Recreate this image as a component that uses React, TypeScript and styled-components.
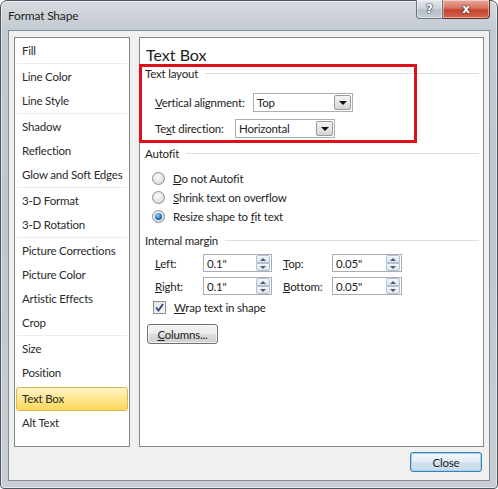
import React from 'react';
import styled, { createGlobalStyle } from 'styled-components';

const GlobalStyle = createGlobalStyle`
  html, body {
    margin: 0;
    padding: 0;
    background: #ffffff;
  }
  body {
    font-family: Lato, "Liberation Sans", sans-serif;
    font-size: 11.5px;
    letter-spacing: -0.2px;
    color: #1e1e1e;
  }
  * {
    box-sizing: border-box;
  }
`;

const Window = styled.div`
  width: 498px;
  height: 489px;
  display: flex;
  flex-direction: column;
  padding: 0 7px 7px 7px;
  border: 1px solid #4f565e;
  border-radius: 7px 7px 4px 4px;
  background: linear-gradient(180deg, #d6dbe1 0%, #c4cad1 6%, #bfc6ce 45%, #c9ced5 100%);
  box-shadow: inset 0 0 0 1px rgba(255, 255, 255, 0.5);
`;

const TitleBar = styled.div`
  height: 29px;
  display: flex;
  align-items: flex-start;
`;

const Title = styled.div`
  margin-top: 7px;
  line-height: 16px;
  font-size: 12px;
  color: #1e1e1e;
`;

const Caption = styled.div`
  margin-left: auto;
  margin-top: -1px;
  display: flex;
`;

const CaptionButton = styled.div<{ $close?: boolean }>`
  width: ${(p) => (p.$close ? 47 : 27)}px;
  height: 19px;
  display: flex;
  align-items: center;
  justify-content: center;
  border: 1px solid ${(p) => (p.$close ? '#6b2b22' : '#6a737d')};
  border-top: none;
  border-left-width: ${(p) => (p.$close ? 0 : 1)}px;
  border-radius: ${(p) => (p.$close ? '0 0 4px 0' : '0 0 0 4px')};
  background: ${(p) =>
    p.$close
      ? 'linear-gradient(180deg, #e9a99c 0%, #d8735f 45%, #c5422b 55%, #d2664c 100%)'
      : 'linear-gradient(180deg, #e4e8ed 0%, #cfd5dc 45%, #b7bfc8 55%, #c6cdd5 100%)'};
  box-shadow: inset 0 0 0 1px rgba(255, 255, 255, 0.45);
  color: #ffffff;
  font-family: "DejaVu Sans", sans-serif;
  font-weight: bold;
  font-size: 12px;
  letter-spacing: 0;
  text-shadow: 0 0 1px #30343a, 0 0 1px #30343a, 0 0 2px #30343a;
`;

const Client = styled.div`
  flex: 1;
  display: flex;
  flex-direction: column;
  padding: 6px 5px 8px 5px;
  background: #f0f0f0;
  border: 1px solid #7f8c99;
`;

const Body = styled.div`
  height: 410px;
  display: flex;
  gap: 9px;
`;

const SideList = styled.div`
  width: 116px;
  padding: 1px 1px 0 1px;
  background: #ffffff;
  border: 1px solid #828790;
`;

const Item = styled.div<{ $selected?: boolean }>`
  height: 24px;
  line-height: ${(p) => (p.$selected ? 22 : 24)}px;
  padding-left: ${(p) => (p.$selected ? 5 : 6)}px;
  margin-top: ${(p) => (p.$selected ? 2 : 0)}px;
  color: #2a2a2a;
  white-space: nowrap;
  border: ${(p) => (p.$selected ? '1px solid #dcb650' : 'none')};
  border-radius: 3px;
  background: ${(p) =>
    p.$selected ? 'linear-gradient(180deg, #fff4c6 0%, #fde68e 50%, #fcd659 100%)' : 'transparent'};
`;

const Separator = styled.div`
  height: 2px;
  margin: 0 1px;
  border-top: 1px solid #ebebeb;
`;

const Panel = styled.div`
  flex: 1;
  position: relative;
  padding: 6px 4px 0 6px;
  background: #ffffff;
  border: 1px solid #828790;
`;

const Heading = styled.div`
  font-size: 16px;
  line-height: 22px;
  letter-spacing: 0;
  color: #1e1e1e;
`;

const GroupHeader = styled.div<{ $top: number }>`
  display: flex;
  align-items: center;
  height: 14px;
  margin-top: ${(p) => p.$top}px;
  margin-left: -1px;
`;

const GroupLine = styled.div`
  flex: 1;
  height: 1px;
  margin-left: 7px;
  background: #d5dfe5;
`;

const FieldRow = styled.div<{ $top: number }>`
  display: flex;
  align-items: center;
  height: 19px;
  margin-top: ${(p) => p.$top}px;
  padding-left: 9px;
`;

const FieldLabel = styled.div<{ $width: number }>`
  width: ${(p) => p.$width}px;
  white-space: nowrap;
`;

const Select = styled.div<{ $width: number }>`
  width: ${(p) => p.$width}px;
  height: 19px;
  display: flex;
  align-items: center;
  padding-left: 3px;
  background: #ffffff;
  border: 1px solid #abadb3;
`;

const DropButton = styled.div`
  width: 17px;
  height: 15px;
  margin: 0 1px 0 auto;
  display: flex;
  align-items: center;
  justify-content: center;
  border: 1px solid #9a9a9a;
  border-radius: 2px;
  background: linear-gradient(180deg, #f4f4f4 0%, #e6e6e6 50%, #d3d3d3 100%);
`;

const Arrow = styled.div`
  width: 0;
  height: 0;
  border-left: 4px solid transparent;
  border-right: 4px solid transparent;
  border-top: 4px solid #111111;
`;

const Annotation = styled.div`
  position: absolute;
  left: -1px;
  top: 26px;
  width: 278px;
  height: 79px;
  border: 3px solid #e0101a;
  pointer-events: none;
`;

const RadioRow = styled.div<{ $top: number }>`
  display: flex;
  align-items: center;
  gap: 8px;
  height: 19px;
  margin-top: ${(p) => p.$top}px;
  padding-left: 6px;
`;

const Radio = styled.div<{ $checked?: boolean }>`
  width: 13px;
  height: 13px;
  border-radius: 50%;
  display: flex;
  align-items: center;
  justify-content: center;
  border: 1px solid #8d8d8d;
  background: radial-gradient(circle at 40% 35%, #fbfbfb 0%, #e4e4e4 55%, #cfcfcf 100%);
  &::after {
    content: '';
    display: ${(p) => (p.$checked ? 'block' : 'none')};
    width: 7px;
    height: 7px;
    border-radius: 50%;
    background: radial-gradient(circle at 40% 35%, #9fd3f6 0%, #2a78bf 50%, #0d3b6e 100%);
  }
`;

const SpinGrid = styled.div`
  display: grid;
  grid-template-columns: 48px 80px 49px 70px;
  grid-auto-rows: 18px;
  row-gap: 5px;
  margin-top: 7px;
  padding-left: 9px;
  align-items: center;
`;

const SpinBox = styled.div<{ $width: number }>`
  width: ${(p) => p.$width}px;
  height: 18px;
  display: flex;
  align-items: center;
  padding-left: 3px;
  background: #ffffff;
  border: 1px solid #abadb3;
`;

const SpinButtons = styled.div`
  margin-left: auto;
  margin-right: 1px;
  width: 14px;
  height: 16px;
  display: flex;
  flex-direction: column;
`;

const SpinHalf = styled.div<{ $up?: boolean }>`
  flex: 1;
  display: flex;
  align-items: center;
  justify-content: center;
  border: 1px solid #b4c0ce;
  border-radius: ${(p) => (p.$up ? '2px 2px 0 0' : '0 0 2px 2px')};
  background: linear-gradient(180deg, #f3f6fa 0%, #dde5ef 100%);
  &::after {
    content: '';
    width: 0;
    height: 0;
    border-left: 3px solid transparent;
    border-right: 3px solid transparent;
    ${(p) => (p.$up ? 'border-bottom: 3px solid #4d5d75;' : 'border-top: 3px solid #4d5d75;')}
  }
`;

const CheckRow = styled.div`
  display: flex;
  align-items: center;
  gap: 8px;
  height: 14px;
  margin-top: 5px;
  padding-left: 7px;
`;

const CheckBox = styled.div`
  width: 13px;
  height: 13px;
  display: flex;
  align-items: center;
  justify-content: center;
  border: 1px solid #8e8f8f;
  background: linear-gradient(135deg, #dfe3ea 0%, #f7f8fa 100%);
`;

const PushButton = styled.div<{ $width: number; $default?: boolean }>`
  width: ${(p) => p.$width}px;
  height: 20px;
  display: flex;
  align-items: center;
  justify-content: center;
  border: 1px solid ${(p) => (p.$default ? '#3c7fb1' : '#707070')};
  border-radius: 3px;
  background: ${(p) =>
    p.$default
      ? 'linear-gradient(180deg, #f2f7fb 0%, #e3edf6 50%, #d2e1ee 51%, #c8dbeb 100%)'
      : 'linear-gradient(180deg, #f2f2f2 0%, #ebebeb 50%, #dddddd 51%, #cfcfcf 100%)'};
  box-shadow: inset 0 0 0 1px ${(p) => (p.$default ? '#9fd4f2' : 'rgba(255,255,255,0.7)')};
  color: #1e1e1e;
`;

const ColumnsButton = styled(PushButton)`
  margin-top: 10px;
  margin-left: 1px;
`;

const Footer = styled.div`
  display: flex;
  justify-content: flex-end;
  margin-top: 5px;
  padding-right: 2px;
`;

const U = styled.span`
  text-decoration: underline;
`;

const groups = [
  ['Fill'],
  ['Line Color', 'Line Style'],
  ['Shadow', 'Reflection', 'Glow and Soft Edges'],
  ['3-D Format', '3-D Rotation'],
  ['Picture Corrections', 'Picture Color', 'Artistic Effects', 'Crop'],
  ['Size', 'Position', 'Text Box', 'Alt Text'],
];

const Spin = ({ value, width }: { value: string; width: number }) => (
  <SpinBox $width={width}>
    {value}
    <SpinButtons>
      <SpinHalf $up />
      <SpinHalf />
    </SpinButtons>
  </SpinBox>
);

export default function App() {
  return (
    <>
      <GlobalStyle />
      <Window>
        <TitleBar>
          <Title>Format Shape</Title>
          <Caption>
            <CaptionButton>?</CaptionButton>
            <CaptionButton $close>x</CaptionButton>
          </Caption>
        </TitleBar>
        <Client>
          <Body>
            <SideList>
              {groups.map((group, gi) => (
                <React.Fragment key={gi}>
                  {gi > 0 && <Separator />}
                  {group.map((name) => (
                    <Item key={name} $selected={name === 'Text Box'}>
                      {name}
                    </Item>
                  ))}
                </React.Fragment>
              ))}
            </SideList>
            <Panel>
              <Heading>Text Box</Heading>
              <GroupHeader $top={0}>
                Text layout
                <GroupLine />
              </GroupHeader>
              <FieldRow $top={13}>
                <FieldLabel $width={98}>
                  <U>V</U>ertical alignment:
                </FieldLabel>
                <Select $width={100}>
                  Top
                  <DropButton>
                    <Arrow />
                  </DropButton>
                </Select>
              </FieldRow>
              <FieldRow $top={7}>
                <FieldLabel $width={80}>
                  Te<U>x</U>t direction:
                </FieldLabel>
                <Select $width={100}>
                  Horizontal
                  <DropButton>
                    <Arrow />
                  </DropButton>
                </Select>
              </FieldRow>
              <Annotation />
              <GroupHeader $top={8}>
                Autofit
                <GroupLine />
              </GroupHeader>
              <RadioRow $top={9}>
                <Radio />
                <span>
                  <U>D</U>o not Autofit
                </span>
              </RadioRow>
              <RadioRow $top={0}>
                <Radio />
                <span>
                  <U>S</U>hrink text on overflow
                </span>
              </RadioRow>
              <RadioRow $top={0}>
                <Radio $checked />
                <span>
                  Resize shape to <U>f</U>it text
                </span>
              </RadioRow>
              <GroupHeader $top={7}>
                Internal margin
                <GroupLine />
              </GroupHeader>
              <SpinGrid>
                <span>
                  <U>L</U>eft:
                </span>
                <Spin value={'0.1"'} width={69} />
                <span>
                  <U>T</U>op:
                </span>
                <Spin value={'0.05"'} width={70} />
                <span>
                  <U>R</U>ight:
                </span>
                <Spin value={'0.1"'} width={69} />
                <span>
                  <U>B</U>ottom:
                </span>
                <Spin value={'0.05"'} width={70} />
              </SpinGrid>
              <CheckRow>
                <CheckBox>
                  <svg width="9" height="9" viewBox="0 0 9 9">
                    <path d="M1 4.5 L3.5 7.5 L8 1" fill="none" stroke="#2e4275" strokeWidth="1.8" />
                  </svg>
                </CheckBox>
                <span>
                  <U>W</U>rap text in shape
                </span>
              </CheckRow>
              <ColumnsButton $width={71}>
                <span>
                  <U>C</U>olumns...
                </span>
              </ColumnsButton>
            </Panel>
          </Body>
          <Footer>
            <PushButton $width={72} $default>
              Close
            </PushButton>
          </Footer>
        </Client>
      </Window>
    </>
  );
}
